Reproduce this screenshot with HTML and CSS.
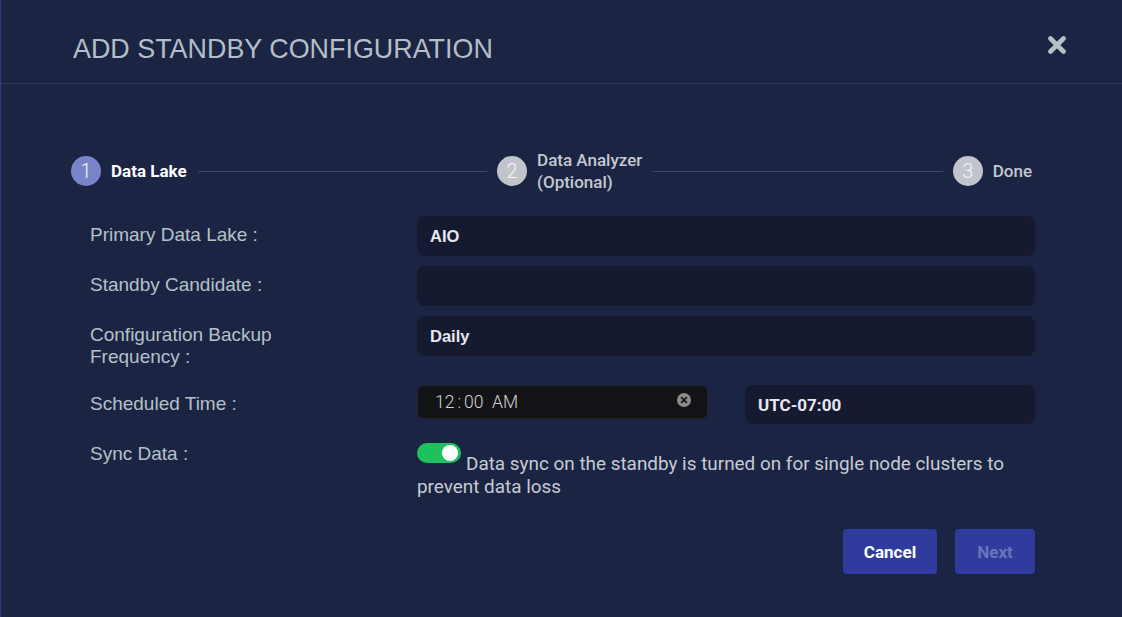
FILE: index.html
```html
<!DOCTYPE html>
<html>
<head>
<meta charset="utf-8">
<link rel="stylesheet" href="styles.css">
</head>
<body>
<div class="modal">
  <header class="header">
    <h1 class="title">ADD STANDBY CONFIGURATION</h1>
    <button class="close" aria-label="Close">
      <svg width="20" height="18" viewBox="0 0 20 18"><path d="M3.5 2.5 L16.5 15.5 M16.5 2.5 L3.5 15.5" stroke="#b5c0c8" stroke-width="4.6" stroke-linecap="round"/></svg>
    </button>
  </header>

  <div class="stepper">
    <div class="step active"><span class="num">1</span><span class="slabel">Data Lake</span></div>
    <div class="sline"></div>
    <div class="step"><span class="num">2</span><span class="slabel">Data Analyzer<br>(Optional)</span></div>
    <div class="sline"></div>
    <div class="step"><span class="num">3</span><span class="slabel">Done</span></div>
  </div>

  <div class="form">
    <div class="row">
      <div class="label">Primary Data Lake :</div>
      <div class="field">AIO</div>
    </div>
    <div class="row">
      <div class="label">Standby Candidate :</div>
      <div class="field"></div>
    </div>
    <div class="row">
      <div class="label">Configuration Backup<br>Frequency :</div>
      <div class="field">Daily</div>
    </div>
    <div class="row row-time">
      <div class="label">Scheduled Time :</div>
      <div class="time-pair">
        <div class="time">
          <span class="time-val">12<span class="colon">:</span>00&nbsp;&nbsp;AM</span>
          <svg class="clear" width="14" height="14" viewBox="0 0 14 14"><circle cx="7" cy="7" r="7" fill="#8c8c8c"/><path d="M4.6 4.6 L9.4 9.4 M9.4 4.6 L4.6 9.4" stroke="#1a1a1a" stroke-width="1.8" stroke-linecap="round"/></svg>
        </div>
        <div class="tz">UTC-07:00</div>
      </div>
    </div>
    <div class="row row-sync">
      <div class="label">Sync Data :</div>
      <div class="sync"><span class="toggle"><span class="knob"></span></span>Data sync on the standby is turned on for single node clusters to prevent data loss</div>
    </div>
  </div>

  <div class="actions">
    <button class="btn">Cancel</button>
    <button class="btn disabled">Next</button>
  </div>
</div>
</body>
</html>
```

FILE: styles.css
```css
html, body {
  margin: 0;
  padding: 0;
}
body {
  background: #1c2444;
  width: 1122px;
  height: 617px;
  overflow: hidden;
}
.modal {
  height: 617px;
  box-sizing: border-box;
  border-left: 1px solid #2b3790;
  background: #1c2444;
}
.header {
  height: 84px;
  box-sizing: border-box;
  border-bottom: 1px solid #2f3856;
  display: flex;
  justify-content: space-between;
  align-items: flex-start;
  padding: 34px 55px 0 72px;
}
.title {
  margin: 0;
  font-family: "Liberation Sans", Arial, sans-serif;
  font-weight: normal;
  font-size: 26.9px;
  line-height: 30px;
  color: #b3bfc8;
  letter-spacing: 0;
}
.close {
  background: none;
  border: 0;
  padding: 0;
  margin-top: 2px;
  width: 20px;
  height: 18px;
  display: block;
}
.close svg { display: block; }

.stepper {
  display: flex;
  align-items: center;
  padding: 0 90px 0 70px;
  margin-top: 72px;
  height: 30px;
  font-family: Roboto, sans-serif;
}
.step {
  display: flex;
  align-items: center;
  gap: 10px;
}
.num {
  width: 30px;
  height: 30px;
  border-radius: 50%;
  background: #c2c4cb;
  color: #f4f4f6;
  font-weight: 300;
  font-size: 20px;
  line-height: 30px;
  text-align: center;
}
.step.active .num {
  background: #7a84cb;
}
.slabel {
  font-size: 17px;
  line-height: 22px;
  color: #c4c8d0;
  font-weight: 500;
}
.step.active .slabel {
  color: #ffffff;
  font-weight: 700;
}
.sline {
  flex: 1;
  height: 1px;
  background: #3b4565;
  margin: 0 10px 0 11px;
}

.form {
  margin-top: 30px;
  padding: 0 87px 0 89px;
}
.row {
  display: grid;
  grid-template-columns: 327px 1fr;
  margin-bottom: 10px;
}
.label {
  font-family: "Liberation Sans", Arial, sans-serif;
  font-size: 19px;
  line-height: 22px;
  color: #b5c1c9;
  padding-top: 8px;
}
.field {
  height: 40px;
  box-sizing: border-box;
  background: #151a30;
  border-radius: 8px;
  padding: 0 13px;
  font-family: "Liberation Sans", Arial, sans-serif;
  font-weight: bold;
  font-size: 16.5px;
  line-height: 40px;
  color: #e6e8ee;
}
.row-time {
  margin-top: 17px;
}
.time-pair {
  display: flex;
  gap: 37px;
  align-items: flex-start;
}
.time {
  width: 291px;
  height: 34px;
  box-sizing: border-box;
  background: #121316;
  border: 1px solid #23252c;
  border-radius: 6px;
  display: flex;
  align-items: center;
  justify-content: space-between;
  padding: 0 16px 0 17px;
  font-family: Roboto, sans-serif;
  font-weight: 300;
  font-size: 17.5px;
  color: #d2d2d4;
}
.colon {
  margin: 0 3px;
}
.clear {
  display: block;
  margin-top: -4px;
}
.tz {
  flex: 1;
  height: 39px;
  box-sizing: border-box;
  background: #151a30;
  border-radius: 8px;
  padding: 0 13px;
  font-family: Roboto, sans-serif;
  font-weight: 700;
  font-size: 17px;
  line-height: 40px;
  color: #e6e8ee;
}
.row-sync {
  margin-top: 19px;
}
.row-sync .label {
  padding-top: 0;
}
.sync {
  font-family: Roboto, sans-serif;
  font-size: 18.9px;
  line-height: 23px;
  color: #c6cbd4;
  font-weight: 400;
}
.toggle {
  display: inline-block;
  position: relative;
  width: 44px;
  height: 20px;
  border-radius: 10px;
  background: #1fc15e;
  vertical-align: 7px;
  margin-right: 5px;
}
.knob {
  position: absolute;
  right: 3px;
  top: 2px;
  width: 16px;
  height: 16px;
  border-radius: 50%;
  background: #ffffff;
}

.actions {
  display: flex;
  justify-content: flex-end;
  gap: 18px;
  padding-right: 87px;
  margin-top: 31px;
}
.btn {
  height: 45px;
  border: 0;
  border-radius: 4px;
  background: #2f3c9e;
  color: #ffffff;
  font-family: Roboto, sans-serif;
  font-weight: 700;
  font-size: 17px;
  padding: 0;
  width: 94px;
}
.btn.disabled {
  width: 80px;
  color: #6a74ba;
}
```
